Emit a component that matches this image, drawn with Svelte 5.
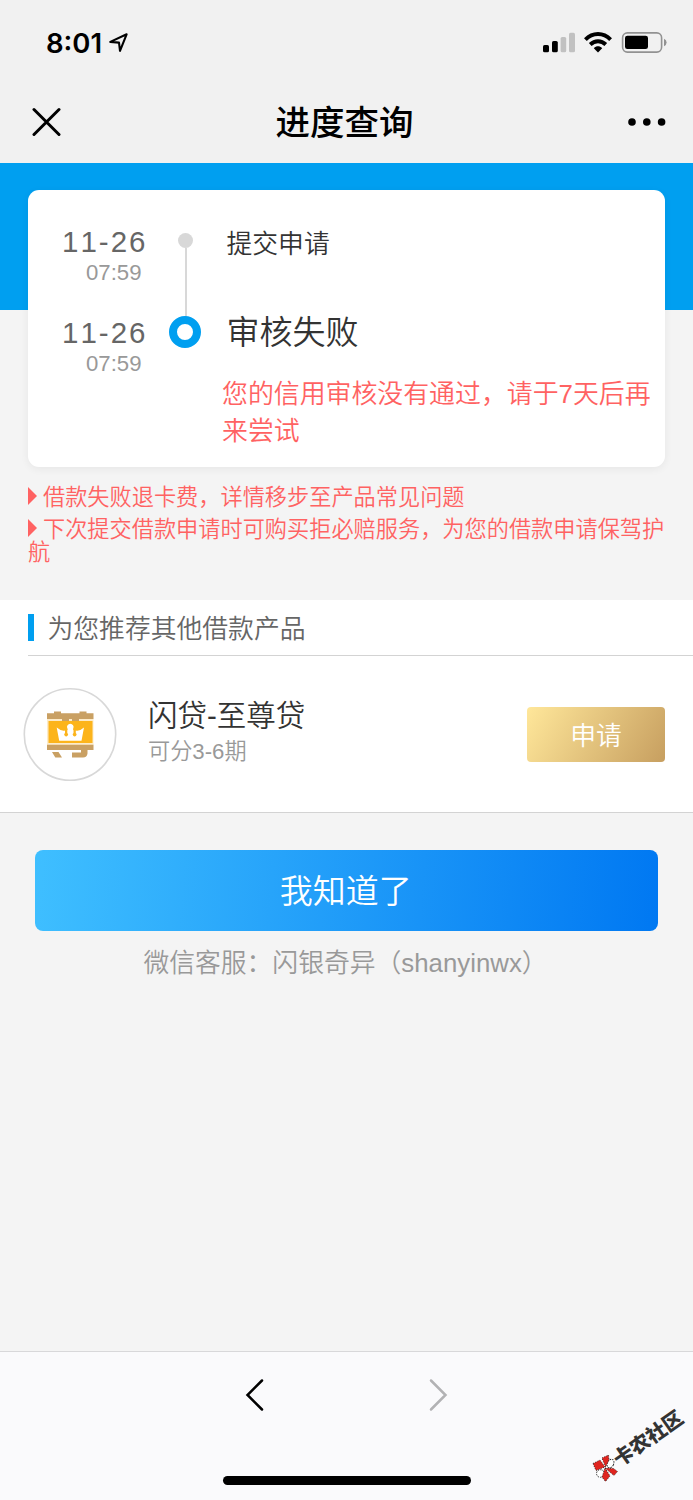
<script>
  const steps = [
    { date: '11-26', time: '07:59', title: '提交申请', current: false },
    { date: '11-26', time: '07:59', title: '审核失败', current: true, detail: '您的信用审核没有通过，请于7天后再来尝试' }
  ];
  const notes = [
    '借款失败退卡费，详情移步至产品常见问题',
    '下次提交借款申请时可购买拒必赔服务，为您的借款申请保驾护航'
  ];
</script>

<div class="screen">
  <header>
    <div class="status">
      <div class="clock">
        <span>8:01</span>
        <svg width="20" height="20" viewBox="0 0 20 20"><path d="M2.300 8.900 18.600 1.300 12 17.800 11 9.600Z" fill="none" stroke="#000" stroke-width="2.100" stroke-linejoin="round" /></svg>
      </div>
      <svg class="signals" width="124" height="22" viewBox="543 32 124 22">
        <rect x="543" y="45" width="6" height="7.3" rx="1.6" />
        <rect x="552" y="41" width="5.8" height="11.3" rx="1.6" />
        <rect x="560.6" y="37" width="5.6" height="15.3" rx="1.6" fill="#c1c1c1" />
        <rect x="569" y="32.7" width="6" height="19.6" rx="1.6" fill="#c1c1c1" />
        <g fill="none" stroke="#000" stroke-width="3.9">
          <path d="M585.4 39.6C592.6 32.2 603.4 32.2 610.6 39.6" />
          <path d="M590.2 44.5C594.8 40.1 601.2 40.1 605.8 44.5" />
        </g>
        <path d="M593.8 48.200C596.4 45.700 599.6 45.700 602.2 48.200L598 52.4Z" />
        <rect x="622.6" y="32.9" width="39" height="19.2" rx="4.8" fill="none" stroke="#929292" stroke-width="1.6" />
        <rect x="625" y="35.7" width="23" height="13.4" rx="2.4" />
        <path d="M664 38.8Q666.6 40 666.6 42.5T664 46.2Z" fill="#929292" />
      </svg>
    </div>
    <nav>
      <svg width="30" height="30" viewBox="0 0 30 30"><path d="M3 2.500 28 27.500M28 2.500 3 27.500" stroke="#000" stroke-width="3" stroke-linecap="round" /></svg>
      <h1>进度查询</h1>
      <svg width="38" height="8" viewBox="0 0 38 8"><circle cx="4" cy="4" r="3.8" /><circle cx="18.8" cy="4" r="3.8" /><circle cx="33.6" cy="4" r="3.8" /></svg>
    </nav>
  </header>

  <section class="progress">
    <div class="card">
      {#each steps as step}
        <div class="step" class:current={step.current}>
          <div class="when">
            <div class="date">{step.date}</div>
            <div class="time">{step.time}</div>
          </div>
          <div class="rail"><i class="dot"></i>{#if !step.current}<i class="line"></i>{/if}</div>
          <div class="what">
            <div class="title">{step.title}</div>
            {#if step.detail}<p>{step.detail}</p>{/if}
          </div>
        </div>
      {/each}
    </div>
  </section>

  <ul class="notes">
    {#each notes as note}
      <li><i class="arrow"></i>{note}</li>
    {/each}
  </ul>

  <section class="products">
    <h2><i></i><span>为您推荐其他借款产品</span></h2>
    <div class="product">
      <svg class="logo" width="94" height="94" viewBox="23 687 94 94">
        <circle cx="70" cy="734.5" r="45.7" fill="#fff" stroke="#d8d8d8" stroke-width="1.6" />
        <path d="M47 719H93.500V745H47Z" fill="#fdebc8" />
        <g fill="#c9a063">
          <path d="M47 713.3H54V711.5H61V713.3H79.5V711.5H86.500V713.3H93.500V719H47Z" />
          <path d="M62 719H69V721H62ZM72 719H79V721H72Z" />
          <path d="M47 744.700H93.500V750H47ZM52 752H58.5L62 757.500H55.300ZM81 750H87.500V753.500Q87 757.500 83 757.500H72V752.500H81Z" />
        </g>
        <path d="M48.500 721H92.500V743H48.500Z" fill="#fcb41b" />
        <path d="M56.700 727.500Q61.500 731.500 65 730.500V733A1.900 1.900 0 1 0 67.300 733V730.200Q68.300 729.500 67.300 728.300A3.300 3.300 0 1 1 73.300 728.300Q72.500 729.500 73.500 730.200V733A1.900 1.900 0 1 0 75.800 733V730.500Q79.500 731.500 84 727.500L81.500 740.800H59.200Z" fill="#fff" />
      </svg>
      <div class="info">
        <h3>闪贷-至尊贷</h3>
        <span>可分3-6期</span>
      </div>
      <button class="apply">申请</button>
    </div>
  </section>

  <main>
    <button class="confirm">我知道了</button>
    <p class="contact">微信客服：闪银奇异（<span>shanyinwx</span>）</p>
  </main>

  <footer>
    <div class="history">
      <svg width="20" height="34" viewBox="0 0 20 34"><path d="M17 2.500 2.500 17 17 31.500" fill="none" stroke="#000" stroke-width="2.500" stroke-linecap="round" /></svg>
      <svg width="20" height="34" viewBox="0 0 20 34"><path d="M3 2.500 17.500 17 3 31.500" fill="none" stroke="#b2b2b4" stroke-width="2.500" stroke-linecap="round" /></svg>
    </div>
    <div class="home"></div>
  </footer>

  <div class="stamp">
    <svg width="27" height="28" viewBox="591 1454 27 28">
      <g stroke="#222" stroke-width=".9">
        <g fill="#fff" stroke-dasharray="1.500 1"><ellipse cx="610.500" cy="1463.500" rx="3.200" ry="4.500" transform="rotate(25 610.500 1463.500)" /><ellipse cx="600.500" cy="1473.500" rx="4" ry="3.800" /></g>
        <path d="M593 1463.500 600 1460 605 1467 596 1470.500ZM602 1458 608.500 1455 609 1460 605.500 1467ZM605 1468 613.500 1468.500 617.500 1471.500 614 1475.500ZM605 1468 610 1476 605.500 1481.500 602 1477Z" fill="#df241f" stroke-dasharray="1 1.500" />
      </g>
    </svg>
    <span>卡农社区</span>
  </div>
</div>

<style>
  :global(body) { margin: 0; }
  .screen {
    position: relative;
    display: flex;
    flex-direction: column;
    width: 693px;
    height: 1500px;
    overflow: hidden;
    background: #f4f4f4;
    font-family: "Liberation Sans", "Noto Sans CJK SC", sans-serif;
    font-weight: 350;
    font-kerning: none;
  }
  h1, h2, h3, p, ul { margin: 0; padding: 0; font-weight: inherit; }
  svg { display: block; flex: none; }
  button { border: 0; padding: 0; color: #fff; font: inherit; }

  header { flex: none; height: 162.500px; background: #f1f1f1; }
  .status { display: flex; justify-content: space-between; align-items: center; height: 86px; padding: 0 26px 0 46px; box-sizing: border-box; }
  .clock { display: flex; align-items: center; gap: 6px; font: 600 27.500px/34px Inter, sans-serif; }
  nav { display: flex; justify-content: space-between; align-items: center; height: 72px; padding: 0 27px 0 31px; }
  h1 { font-size: 34.500px; line-height: 50px; padding-top: 2px; font-weight: 500; color: #000; }

  .progress { flex: none; padding: 27.500px 28px 0; background: linear-gradient(#009ff0 147.500px, transparent 147.500px); }
  .card { height: 277px; box-sizing: border-box; padding-top: 35px; background: #fff; border-radius: 11px; box-shadow: 0 2px 8px rgba(0, 0, 0, .06); }
  .step { display: grid; grid-template-columns: 119.500px 76.500px 1fr; height: 91px; }
  .when { text-align: right; }
  .date { font-size: 29.500px; line-height: 34px; letter-spacing: 2px; color: #666; }
  .time { padding-right: 6px; font-size: 22.200px; line-height: 28px; color: #999; }
  .rail { display: flex; flex-direction: column; align-items: center; padding-top: 7.500px; }
  .dot { flex: none; width: 15px; height: 15px; border-radius: 50%; background: #d8d8d8; }
  .line { width: 2px; height: 72px; background: #d8d8d8; }
  .current .rail { padding: 0 2px 0 0; }
  .current .dot { box-sizing: border-box; width: 32px; height: 32px; border: 8.500px solid #009ff0; background: #fff; }
  .title { padding-left: 2.500px; font-size: 25.800px; line-height: 39px; color: #333; }
  .current .title { font-size: 33px; line-height: 34px; }
  .what p { padding: 26px 10px 0 0; margin-left: -2px; font-size: 25.900px; line-height: 37px; color: #ff6262; }

  .notes { flex: none; height: 133px; box-sizing: border-box; padding: 19px 28px 0; list-style: none; font-size: 22.200px; line-height: 23.500px; color: #ff6262; }
  .notes li { margin-bottom: 8px; }
  .arrow { display: inline-block; margin-right: 6px; border-style: solid; border-width: 9px 0 9px 9px; border-color: transparent transparent transparent #ff6262; }

  .products { flex: none; height: 213px; box-sizing: border-box; background: #fff; border-bottom: 1px solid #d3d3d3; }
  h2 { display: flex; align-items: center; gap: 13.500px; height: 55px; margin-left: 28px; border-bottom: 1px solid #d3d3d3; font-size: 25.800px; line-height: 38px; color: #666; }
  h2 i { width: 6px; height: 27px; background: #009ff0; }
  h2 span { padding-top: 2px; }
  .product { display: flex; align-items: center; height: 156px; padding: 0 28px 0 23px; }
  .info { flex: 1; padding: 0 0 5px 31px; }
  h3 { font-size: 29.500px; line-height: 40px; color: #333; }
  .info span { display: block; font-size: 22.200px; line-height: 32px; color: #999; }
  .apply { width: 138px; height: 55px; padding-bottom: 1px; border-radius: 4px; background: linear-gradient(120deg, #ffe79a, #c79f60); font-size: 25.800px; }

  main { flex: 1; padding: 37px 34.500px 0; }
  .confirm { display: block; width: 623.500px; height: 81px; padding: 0 1px 4px 0; border-radius: 8px; background: linear-gradient(95deg, #3fbfff, #0078f2); font-size: 33px; }
  .contact { margin-top: 13px; padding-right: 2px; text-align: center; font-size: 25.800px; line-height: 38px; color: #999; }

  footer { flex: none; display: flex; flex-direction: column; align-items: center; height: 149px; box-sizing: border-box; border-top: 1px solid #d8d8da; background: #fafafc; }
  .history { display: flex; gap: 163px; padding-top: 26px; }
  .home { width: 248px; height: 9px; margin-top: 64px; border-radius: 5px; background: #000; }

  .stamp { position: absolute; left: 591px; top: 1400px; width: 102px; height: 100px; color: #333; }
  .stamp svg { position: absolute; left: 0; top: 54px; }
  .stamp span { position: absolute; left: 17px; top: 26px; width: 82px; font-size: 20px; line-height: 24px; font-weight: 900; white-space: nowrap; transform: rotate(-35deg); }
</style>
